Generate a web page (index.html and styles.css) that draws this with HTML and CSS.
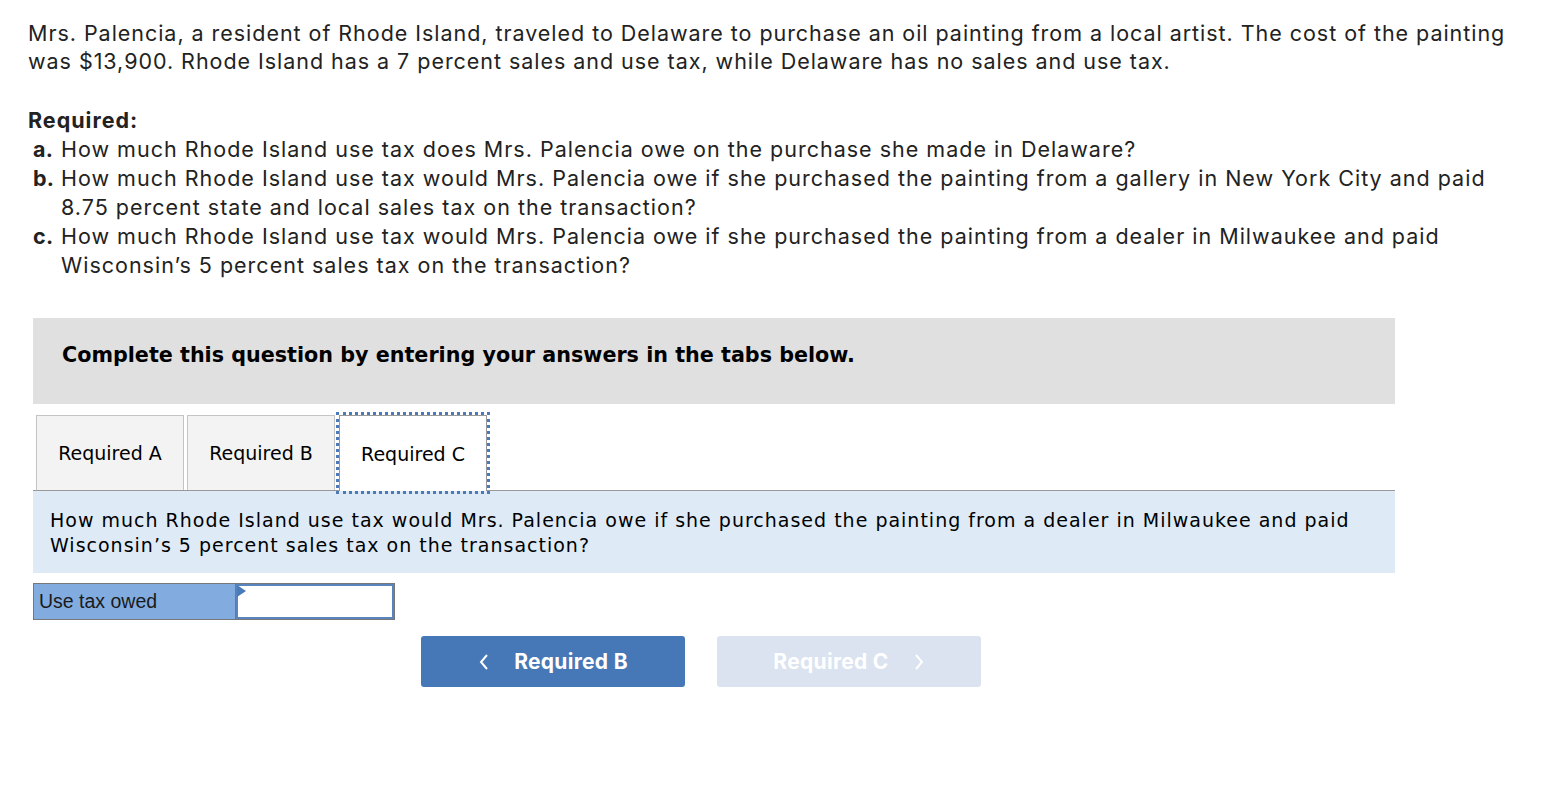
FILE: index.html
```html
<!DOCTYPE html>
<html>
<head>
<meta charset="utf-8">
<link rel="stylesheet" href="styles.css">
</head>
<body>
<div class="page">
  <p class="intro">Mrs. Palencia, a resident of Rhode Island, traveled to Delaware to purchase an oil painting from a local artist. The cost of the painting was $13,900. Rhode Island has a 7 percent sales and use tax, while Delaware has no sales and use tax.</p>
  <div class="required">
    <div class="req-title">Required:</div>
    <div class="req-item"><b>a.</b><span>How much Rhode Island use tax does Mrs. Palencia owe on the purchase she made in Delaware?</span></div>
    <div class="req-item"><b>b.</b><span>How much Rhode Island use tax would Mrs. Palencia owe if she purchased the painting from a gallery in New York City and paid 8.75 percent state and local sales tax on the transaction?</span></div>
    <div class="req-item"><b>c.</b><span>How much Rhode Island use tax would Mrs. Palencia owe if she purchased the painting from a dealer in Milwaukee and paid Wisconsin’s 5 percent sales tax on the transaction?</span></div>
  </div>
  <div class="widget">
    <div class="banner">Complete this question by entering your answers in the tabs below.</div>
    <div class="tabs">
      <div class="tab">Required A</div>
      <div class="tab">Required B</div>
      <div class="tab active">Required C</div>
    </div>
    <div class="question">How much Rhode Island use tax would Mrs. Palencia owe if she purchased the painting from a dealer in Milwaukee and paid Wisconsin’s 5 percent sales tax on the transaction?</div>
    <div class="answer-row">
      <div class="label-cell">Use tax owed</div>
      <div class="input-cell"><span class="marker"></span></div>
    </div>
    <div class="nav">
      <button class="btn prev"><svg width="12" height="18" viewBox="0 0 12 18"><path d="M9 2 L3 9 L9 16" fill="none" stroke="#fff" stroke-width="2"/></svg><span>Required B</span></button>
      <button class="btn next"><span>Required C</span><svg width="12" height="18" viewBox="0 0 12 18"><path d="M3 2 L9 9 L3 16" fill="none" stroke="#fff" stroke-width="2"/></svg></button>
    </div>
  </div>
</div>
</body>
</html>
```

FILE: styles.css
```css
html, body { margin: 0; padding: 0; background: #fff; }
.page {
  padding: 19px 0 0 28px;
  font-family: "Inter", "Open Sans", sans-serif;
  color: #222;
}
.intro {
  margin: 0;
  width: 1492px;
  font-size: 21.5px;
  letter-spacing: 0.96px;
  line-height: 28px;
}
.required { margin-top: 31px; font-size: 21.5px; letter-spacing: 1px; line-height: 29px; }
.req-title { font-weight: bold; }
.req-item { display: flex; padding-left: 5px; width: 1487px; }
.req-item b { width: 28px; flex: none; letter-spacing: 0.3px; }
.widget { margin: 38px 0 0 5px; width: 1362px; }
.banner {
  background: #e0e0e0;
  height: 86px;
  box-sizing: border-box;
  display: flex;
  align-items: center;
  padding: 0 0 12px 29px;
  font-family: "DejaVu Sans", Verdana, sans-serif;
  font-weight: bold;
  font-size: 20.7px;
  color: #000;
}
.tabs {
  display: flex;
  gap: 3px;
  margin-top: 11px;
  padding-left: 3px;
  border-bottom: 1px solid #999;
  height: 75px;
}
.tab {
  box-sizing: border-box;
  width: 148px;
  height: 75px;
  border: 1px solid #c4c4c4;
  border-bottom: none;
  background: #f3f3f3;
  display: flex;
  align-items: center;
  justify-content: center;
  font-family: "DejaVu Sans", Verdana, sans-serif;
  font-size: 19px;
  color: #000;
}
.tab.active {
  background: #fff;
  border: 1px solid #999;
  border-bottom: none;
  outline: 3px dotted #4a7ab8;
  margin-left: 1px;
  height: 76px;
  position: relative;
  z-index: 1;
}
.question {
  background: #deebf7;
  height: 82px;
  box-sizing: border-box;
  padding: 17px 17px 0 17px;
  font-family: "DejaVu Sans", Verdana, sans-serif;
  font-size: 19px;
  letter-spacing: 1px;
  line-height: 25px;
  color: #000;
}
.answer-row {
  margin-top: 10px;
  display: flex;
  width: 362px;
  height: 37px;
  border: 1px solid #777;
  box-sizing: border-box;
}
.label-cell {
  width: 202px;
  background: #82ace0;
  font-family: "Liberation Sans", Arial, sans-serif;
  font-size: 19.5px;
  color: #1a1a1a;
  display: flex;
  align-items: center;
  padding-left: 5px;
  box-sizing: border-box;
  border-right: 1px solid #777;
}
.input-cell {
  flex: 1;
  background: #fff;
  border: 2px solid #5a84bd;
  position: relative;
}
.marker {
  position: absolute;
  left: -1px;
  top: -1px;
  width: 0;
  height: 0;
  border-top: 6px solid transparent;
  border-bottom: 6px solid transparent;
  border-left: 9px solid #4a7ab8;
}
.nav {
  display: flex;
  gap: 32px;
  margin: 16px 0 0 388px;
}
.btn {
  width: 264px;
  height: 51px;
  border: none;
  border-radius: 3px;
  display: flex;
  align-items: center;
  justify-content: center;
  gap: 24px;
  font-family: "Inter", "Open Sans", sans-serif;
  font-weight: bold;
  font-size: 21px;
  letter-spacing: 0.3px;
  color: #fff;
  padding: 0;
}
.btn.prev { background: #4677b6; }
.btn.next { background: #dae3ef; }
```
